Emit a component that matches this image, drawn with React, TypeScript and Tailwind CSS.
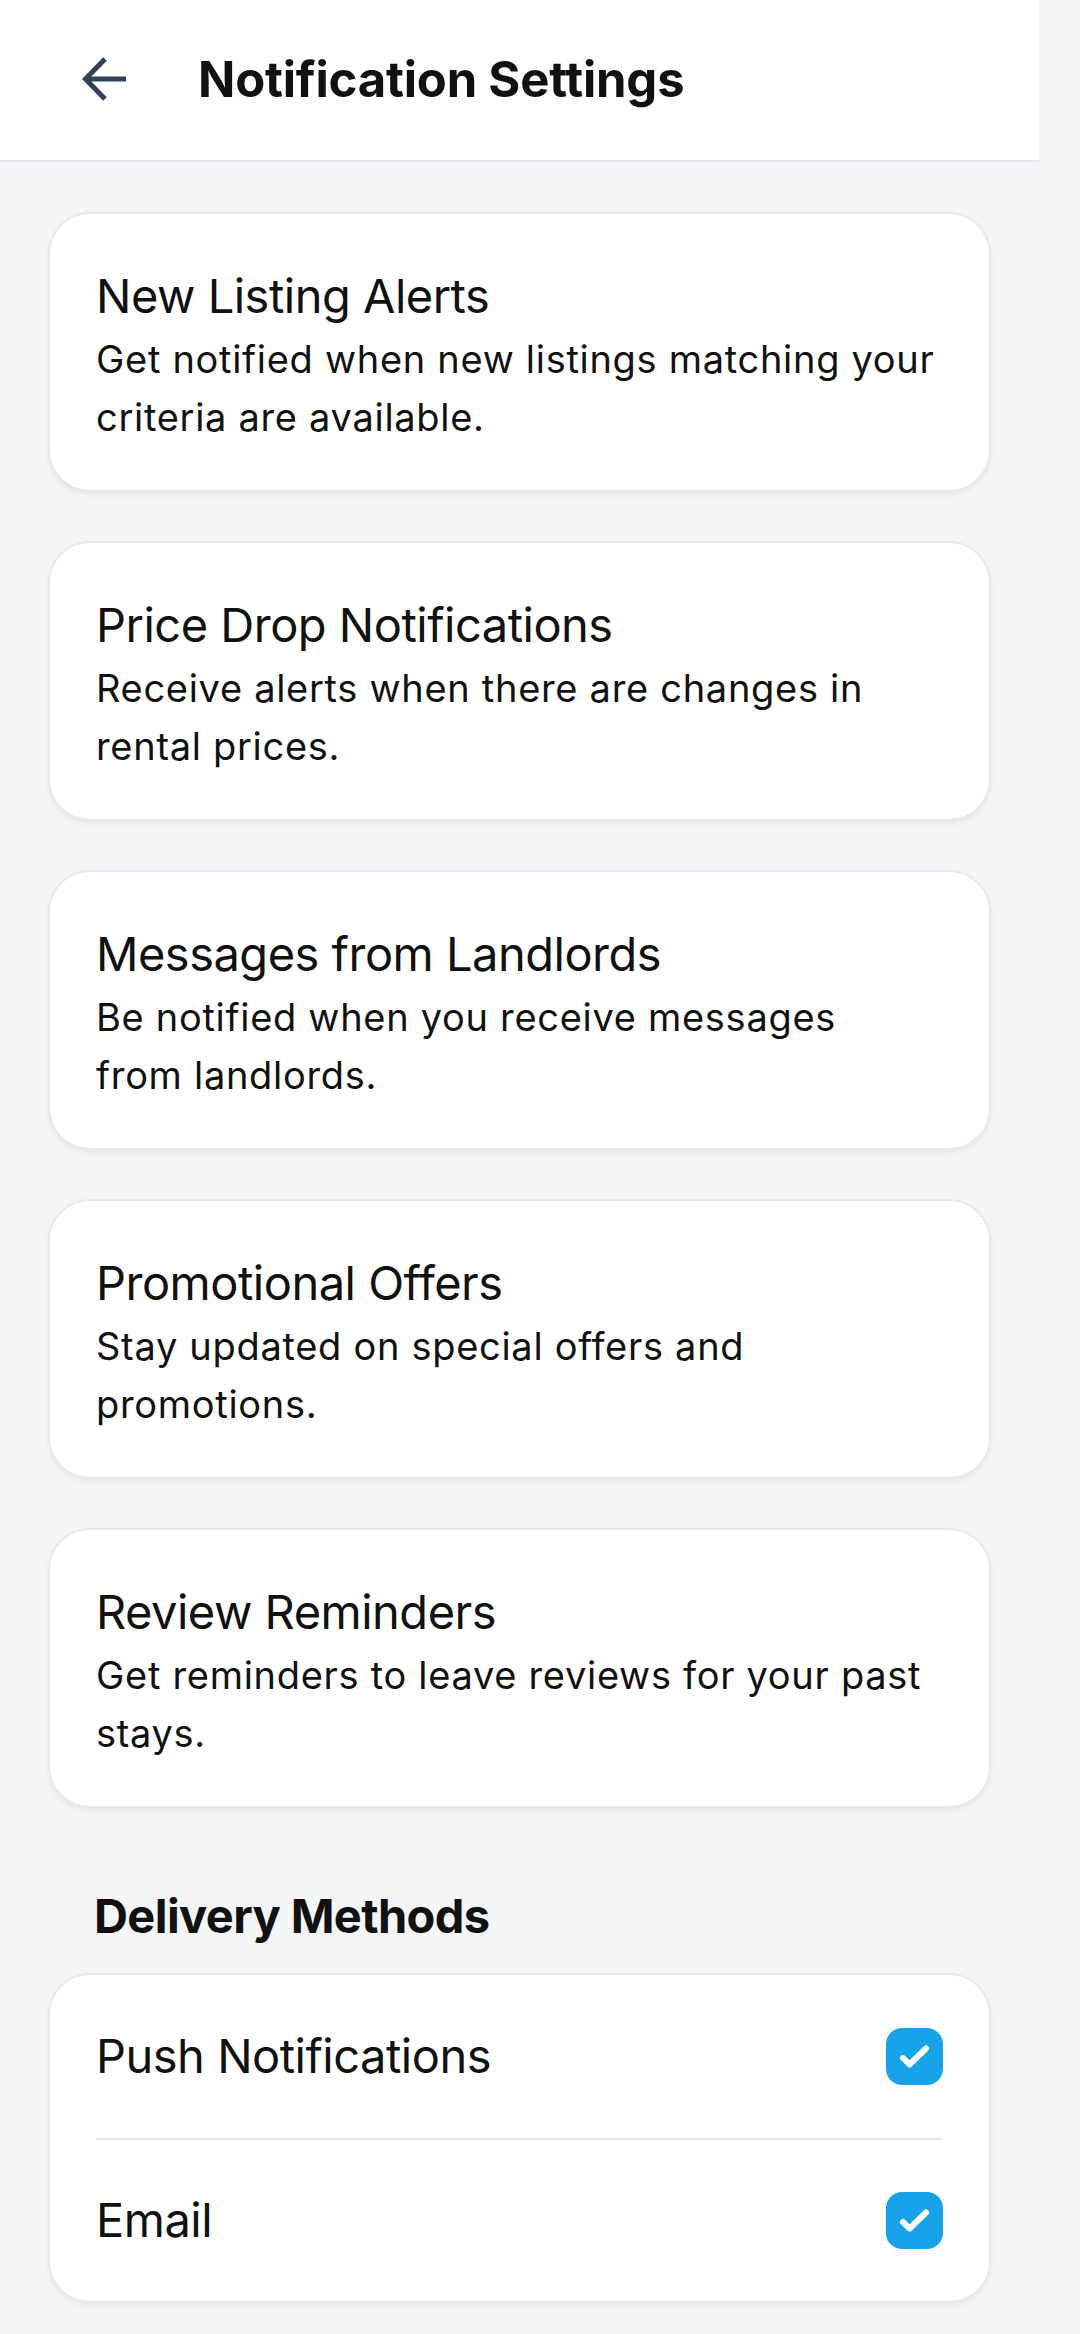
import React from 'react';

const font = { fontFamily: 'Inter, "Noto Sans", sans-serif' };

interface AlertSetting {
    title: string;
    lines: string[];
}

const alertSettings: AlertSetting[] = [
    { title: 'New Listing Alerts', lines: ['Get notified when new listings matching your', 'criteria are available.'] },
    { title: 'Price Drop Notifications', lines: ['Receive alerts when there are changes in', 'rental prices.'] },
    { title: 'Messages from Landlords', lines: ['Be notified when you receive messages', 'from landlords.'] },
    { title: 'Promotional Offers', lines: ['Stay updated on special offers and', 'promotions.'] },
    { title: 'Review Reminders', lines: ['Get reminders to leave reviews for your past', 'stays.'] },
];

const deliveryMethods = ['Push Notifications', 'Email'];

const BackArrow = () => (
    <svg width="46" height="46" viewBox="0 0 46 46" fill="none">
        <path d="M44 23H4" stroke="#334155" strokeWidth="5" />
        <path d="M23 3L3.5 23L23 43" stroke="#334155" strokeWidth="5" strokeLinejoin="miter" />
    </svg>
);

const CheckedBox = () => (
    <div className="w-[57px] h-[57px] rounded-[16px] bg-[#17a3e9] flex items-center justify-center">
        <svg width="57" height="57" viewBox="0 0 57 57" fill="none">
            <path d="M17 30L23.5 36.5L40 20.5" stroke="white" strokeWidth="6" strokeLinecap="round" strokeLinejoin="round" />
        </svg>
    </div>
);

const SettingCard: React.FC<AlertSetting> = ({ title, lines }) => (
    <div className="bg-white rounded-[42px] border-2 border-[#e8e9ec] shadow-[0_3px_5px_rgba(0,0,0,0.06)] px-[46px] pt-[47px] pb-[44px]">
        <div className="text-[47px] leading-[69px] text-[#111111] tracking-[-0.5px]">{title}</div>
        <div className="text-[38px] leading-[58px] text-[#111111] tracking-[0.7px]">
            {lines.map((line) => (
                <span key={line} className="block whitespace-nowrap">{line}</span>
            ))}
        </div>
    </div>
);

export default function App() {
    return (
        <div className="min-h-[2334px] w-full bg-[#f4f5f7]" style={font}>
            <div className="w-[1039px]">
                <header className="h-[162px] bg-white border-b-2 border-[#e2e8f0] flex items-center">
                    <div className="ml-[82px] mt-[-2px] flex items-center">
                        <BackArrow />
                    </div>
                    <h1 className="ml-[70px] text-[49px] font-bold text-[#111111] tracking-[-0.2px]">Notification Settings</h1>
                </header>

                <main className="px-[48px] pt-[50px]">
                    <div className="flex flex-col gap-[49px]">
                        {alertSettings.map((s) => (
                            <SettingCard key={s.title} {...s} />
                        ))}
                    </div>

                    <h2 className="pl-[46px] mt-[75px] mb-[24px] text-[47px] leading-[66px] font-bold text-[#111111] tracking-[-0.6px]">
                        Delivery Methods
                    </h2>

                    <div className="bg-white rounded-[42px] border-2 border-[#e8e9ec] shadow-[0_3px_5px_rgba(0,0,0,0.06)] px-[46px]">
                        {deliveryMethods.map((m, i) => (
                            <div
                                key={m}
                                className={`h-[163px] flex items-center justify-between ${i > 0 ? 'border-t-2 border-[#e5e7eb]' : ''}`}
                            >
                                <span className="text-[47px] text-[#111111] tracking-[-0.5px]">{m}</span>
                                <CheckedBox />
                            </div>
                        ))}
                    </div>
                </main>
            </div>
        </div>
    );
}
